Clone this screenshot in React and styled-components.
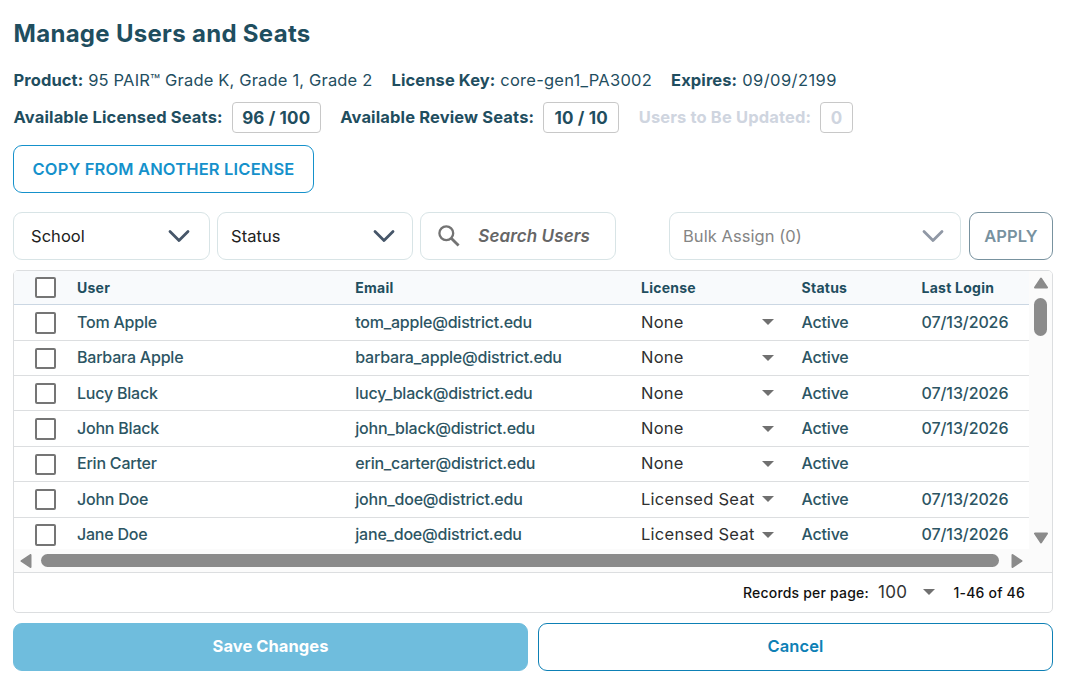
import React from "react";
import styled, { createGlobalStyle } from "styled-components";

const GlobalStyle = createGlobalStyle`
  * { box-sizing: border-box; }
  body { margin: 0; background: #fff; font-family: Inter, "Liberation Sans", sans-serif; color: #1f4e5f; }
  button { font-family: inherit; cursor: pointer; }
`;

const Page = styled.main`
  width: 1066px;
  height: 685px;
  padding: 18px 13px 0;
  overflow: hidden;
  display: flex;
  flex-direction: column;
`;

const Title = styled.h1`
  margin: 0;
  padding-left: 0.5px;
  height: 32px;
  line-height: 32px;
  font-size: 24px;
  font-weight: 700;
  letter-spacing: 0.3px;
  white-space: nowrap;
`;

const InfoRow = styled.div`
  display: flex;
  height: 24px;
  margin-top: 18px;
  padding-left: 0.5px;
  line-height: 24px;
  gap: 19px;
  font-size: 16.5px;
  white-space: nowrap;
`;

const InfoItem = styled.span`
  letter-spacing: ${(p) => p.$spacing}px;
  b { font-weight: 700; letter-spacing: 0.1px; }
`;

const SeatRow = styled.div`
  display: flex;
  height: 31px;
  margin-top: 10px;
  padding-left: 0.5px;
  gap: 19.5px;
`;

const SeatItem = styled.div`
  display: flex;
  gap: 9px;
  line-height: 30px;
  font-size: 16.5px;
  font-weight: 700;
  letter-spacing: 0.14px;
  white-space: nowrap;
  color: ${(p) => (p.$muted ? "#cfd5df" : "#1f4e5f")};
`;

const SeatCount = styled.span`
  width: ${(p) => p.$width}px;
  height: 31px;
  border: 1px solid #c8c8c8;
  border-radius: 4px;
  text-align: center;
  font-size: 17px;
`;

const CopyButton = styled.button`
  width: 301px;
  height: 48px;
  margin-top: 12px;
  padding: 0;
  border: 1px solid #1591cb;
  border-radius: 9px;
  background: #fff;
  color: #1591cb;
  font-size: 16.5px;
  font-weight: 600;
  letter-spacing: 0.16px;
`;

const Filters = styled.div`
  display: flex;
  height: 48px;
  margin-top: 19px;
`;

const Field = styled.div`
  width: ${(p) => p.$width}px;
  height: 48px;
  margin-right: ${(p) => p.$after}px;
  padding: 0 ${(p) => p.$right ?? 17}px ${(p) => p.$bottom ?? 0}px ${(p) => p.$left ?? 13}px;
  display: flex;
  align-items: center;
  justify-content: space-between;
  border: 1px solid #d8e4e6;
  border-radius: 9px;
  font-size: 16.5px;
  letter-spacing: 0.05px;
  color: ${(p) => (p.$disabled ? "#858585" : "#212121")};
  white-space: nowrap;
`;

const Placeholder = styled.span`
  font-size: 17px;
  font-weight: 600;
  font-style: italic;
  letter-spacing: 0.1px;
  color: #666;
`;

const ApplyButton = styled.button`
  width: 84px;
  height: 48px;
  padding: 0;
  border: 1px solid #78929f;
  border-radius: 9px;
  background: #fff;
  color: #78929f;
  font-size: 16.5px;
  font-weight: 600;
`;

const TablePanel = styled.section`
  height: 343px;
  margin-top: 10px;
  border: 1px solid #dcdee0;
  border-radius: 5px;
  overflow: hidden;
`;

const ScrollArea = styled.div`
  display: grid;
  grid-template-columns: 1015px 23px;
  grid-template-rows: 278px 23px;
  background: #fbfbfb;
`;

const Rows = styled.div`
  overflow: hidden;
  background: #fff;
`;

const rowGrid = `
  display: grid;
  grid-template-columns: 63px 278.3px 285.7px 160.6px 120px 107.4px;
  align-items: center;
  white-space: nowrap;
`;

const HeaderRow = styled.div`
  ${rowGrid}
  height: 34.22px;
  background: #f8fafc;
  border-bottom: 1px solid #cbd7e3;
  font-size: 14px;
  font-weight: 700;
  letter-spacing: 0.24px;
`;

const Row = styled.div`
  ${rowGrid}
  height: 35.4px;
  border-bottom: 1px solid #dcdee0;
  font-size: 16px;
  font-weight: 500;
  letter-spacing: -0.22px;
  color: #2c5563;
`;

const Cell = styled.span`
  padding-bottom: 1.4px;
`;

const DateCell = styled(Cell)`
  letter-spacing: -0.1px;
`;

const Checkbox = styled.span`
  width: 21px;
  height: ${(p) => (p.$row ? 21.4 : 21)}px;
  margin-left: 21px;
  margin-top: ${(p) => (p.$row ? 0.8 : 0)}px;
  border: 2px solid #757575;
  border-radius: 2px;
  background: #fff;
`;

const LicenseSelect = styled.div`
  display: flex;
  align-items: center;
  justify-content: space-between;
  width: 133px;
  color: #303030;
  font-size: 16.5px;
  font-weight: 400;
  letter-spacing: 0.26px;
`;

const VerticalBar = styled.div`
  display: flex;
  flex-direction: column;
  align-items: center;
  padding: 6px 0 5px;
  svg:last-child { margin-top: auto; }
`;

const HorizontalBar = styled.div`
  display: flex;
  align-items: center;
  padding: 0 5.5px;
`;

const Thumb = styled.div`
  width: ${(p) => p.$w}px;
  height: ${(p) => p.$h}px;
  border-radius: 7px;
  background: #8b8b8b;
`;

const VThumb = styled(Thumb)`
  margin-top: 9px;
`;

const HThumb = styled(Thumb)`
  margin: 0 12px 0 9.5px;
`;

const Footer = styled.footer`
  height: 40px;
  border-top: 1px solid #dcdee0;
  padding-right: 27px;
  display: flex;
  align-items: center;
  justify-content: flex-end;
  font-size: 14px;
  font-weight: 500;
  letter-spacing: 0.2px;
  color: #111;
  white-space: nowrap;
`;

const PageSize = styled.span`
  display: flex;
  align-items: center;
  justify-content: space-between;
  width: 57px;
  margin: 0 18.5px 0 9px;
  padding-bottom: 1px;
  font-size: 17px;
  font-weight: 400;
  letter-spacing: 0.3px;
  color: #333;
`;

const Actions = styled.div`
  display: grid;
  grid-template-columns: 515px 515px;
  gap: 10px;
  margin-top: 10px;
`;

const ActionButton = styled.button`
  height: 48px;
  padding: 0 0 2px;
  border: 1px solid ${(p) => (p.$primary ? "#6fbddd" : "#0d80b5")};
  border-radius: 9px;
  background: ${(p) => (p.$primary ? "#6fbddd" : "#fff")};
  color: ${(p) => (p.$primary ? "#fff" : "#0d80b5")};
  font-size: 16.5px;
  font-weight: ${(p) => (p.$primary ? 700 : 600)};
  letter-spacing: ${(p) => (p.$primary ? 0.05 : 0.12)}px;
`;

const Chevron = ({ color = "#465669" }) => (
  <svg width="22" height="14" viewBox="0 0 22 14" fill="none" stroke={color} strokeWidth="2.8" strokeLinecap="round" strokeLinejoin="round">
    <path d="M2 2.4 11 11.5 20 2.4" />
  </svg>
);

const Caret = () => (
  <svg width="12" height="6" viewBox="0 0 12 6" fill="#707070">
    <path d="M0 0H12L6 6Z" />
  </svg>
);

const SearchIcon = () => (
  <svg width="22" height="22" viewBox="0 0 22 22" fill="none" stroke="#737373" strokeWidth="2.3">
    <circle cx="8.3" cy="8.3" r="6.9" />
    <path d="M13.2 13.2 20.6 20.6" strokeWidth="2.8" />
  </svg>
);

const arrows = {
  up: "M7 1.5 13 10.5H1Z",
  down: "M1 1.5H13L7 10.5Z",
  left: "M10.5 1V13L1.5 7Z",
  right: "M1.5 1 10.5 7 1.5 13Z",
};

const Arrow = ({ dir }) => {
  const upright = dir === "up" || dir === "down";
  const w = upright ? 14 : 12;
  const h = upright ? 12 : 14;
  return (
    <svg width={w} height={h} viewBox={`0 0 ${w} ${h}`} fill="#8b8b8b" stroke="#8b8b8b" strokeWidth="2" strokeLinejoin="round">
      <path d={arrows[dir]} />
    </svg>
  );
};

const users = [
  ["Tom Apple", "tom_apple", "None", true],
  ["Barbara Apple", "barbara_apple", "None", false],
  ["Lucy Black", "lucy_black", "None", true],
  ["John Black", "john_black", "None", true],
  ["Erin Carter", "erin_carter", "None", false],
  ["John Doe", "john_doe", "Licensed Seat", true],
  ["Jane Doe", "jane_doe", "Licensed Seat", true],
];

export default function App() {
  return (
    <Page>
      <GlobalStyle />
      <Title>Manage Users and Seats</Title>
      <InfoRow>
        <InfoItem $spacing={0.17}><b>Product:</b> 95 PAIR™ Grade K, Grade 1, Grade 2</InfoItem>
        <InfoItem $spacing={0.24}><b>License Key:</b> core-gen1_PA3002</InfoItem>
        <InfoItem $spacing={0.42}><b>Expires:</b> 09/09/2199</InfoItem>
      </InfoRow>
      <SeatRow>
        <SeatItem>Available Licensed Seats:<SeatCount $width={89}>96 / 100</SeatCount></SeatItem>
        <SeatItem>Available Review Seats:<SeatCount $width={76}>10 / 10</SeatCount></SeatItem>
        <SeatItem $muted>Users to Be Updated:<SeatCount $width={33}>0</SeatCount></SeatItem>
      </SeatRow>
      <CopyButton>COPY FROM ANOTHER LICENSE</CopyButton>
      <Filters>
        <Field $width={197} $after={7} $left={17} $right={19.5} $bottom={1}>School<Chevron /></Field>
        <Field $width={196} $after={7}>Status<Chevron /></Field>
        <Field $width={196} $after={53} $left={17} $right={25} $bottom={1}><SearchIcon /><Placeholder>Search Users</Placeholder></Field>
        <Field $width={292} $after={8} $right={16.5} $disabled>Bulk Assign (0)<Chevron color="#9098a5" /></Field>
        <ApplyButton>APPLY</ApplyButton>
      </Filters>
      <TablePanel>
        <ScrollArea>
          <Rows>
            <HeaderRow>
              <Checkbox />
              <span>User</span>
              <span>Email</span>
              <span>License</span>
              <span>Status</span>
              <span>Last Login</span>
            </HeaderRow>
            {users.map(([name, mail, license, seen]) => (
              <Row key={mail}>
                <Checkbox $row />
                <Cell>{name}</Cell>
                <Cell>{mail}@district.edu</Cell>
                <LicenseSelect><Cell>{license}</Cell><Caret /></LicenseSelect>
                <Cell>Active</Cell>
                <DateCell>{seen ? "07/13/2026" : ""}</DateCell>
              </Row>
            ))}
          </Rows>
          <VerticalBar><Arrow dir="up" /><VThumb $w={13} $h={38} /><Arrow dir="down" /></VerticalBar>
          <HorizontalBar><Arrow dir="left" /><HThumb $w={958} $h={13} /><Arrow dir="right" /></HorizontalBar>
        </ScrollArea>
        <Footer>
          Records per page:
          <PageSize>100<Caret /></PageSize>
          1-46 of 46
        </Footer>
      </TablePanel>
      <Actions>
        <ActionButton $primary>Save Changes</ActionButton>
        <ActionButton>Cancel</ActionButton>
      </Actions>
    </Page>
  );
}
